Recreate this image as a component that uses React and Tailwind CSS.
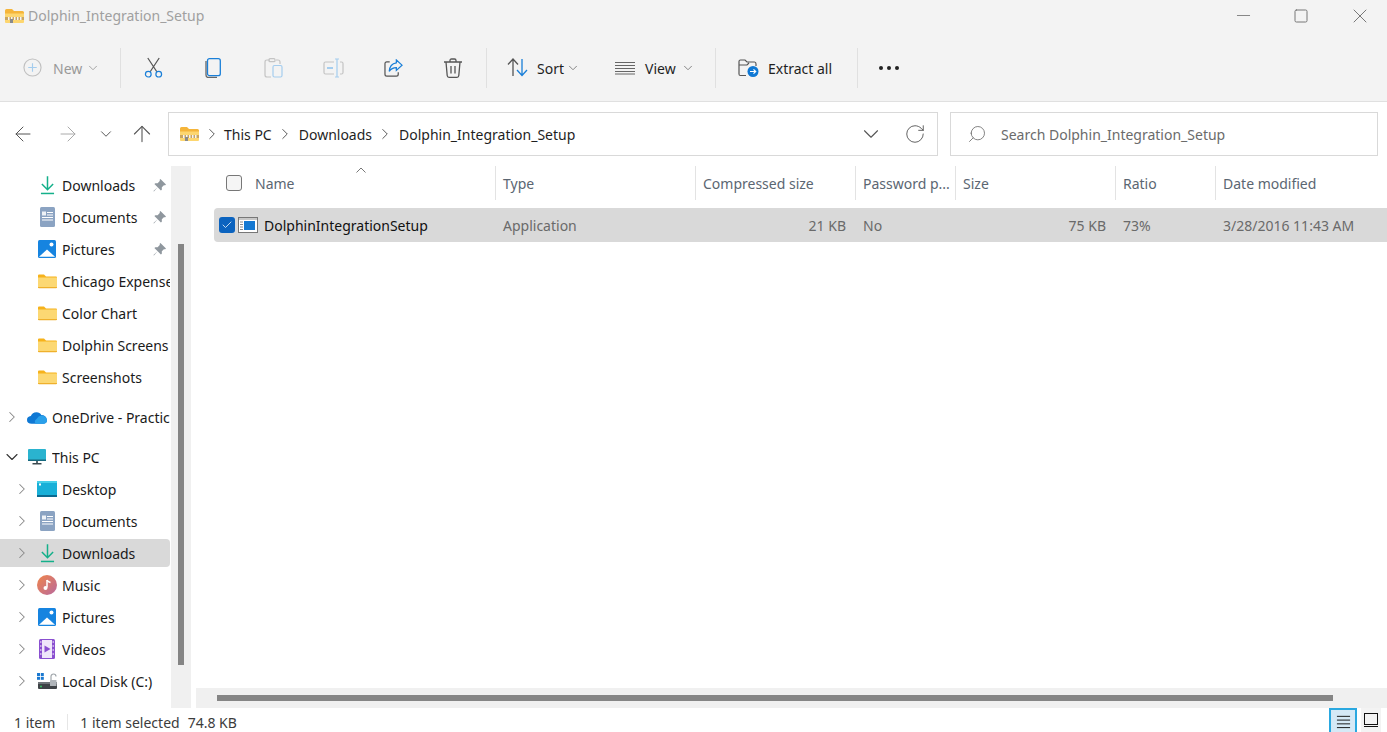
import { ArrowLeft, ArrowRight, ArrowUp, ChevronDown, ChevronRight, Check, RotateCw, Search, Minus, Square, X } from 'lucide-react';

function ZipFolder({ className = 'w-[19px] h-[16px]' }) {
  return (
    <svg viewBox="0 0 19 16" className={className}>
      <path d="M0 2.500Q0 1 1.500 1H7l2 2h8.500Q19 3 19 4.500V6H0z" fill="#f5b53a" />
      <path d="M0 5.500h19v8.500q0 1-1 1H1q-1 0-1-1z" fill="#fdd66f" />
      <rect x="0" y="9" width="19" height="3" fill="#c9a560" />
      <rect x="3" y="9" width="1.500" height="3" fill="#f4f4f4" />
      <rect x="6" y="9" width="1.500" height="3" fill="#f4f4f4" />
      <rect x="9" y="9" width="1.500" height="3" fill="#f4f4f4" />
      <rect x="12" y="9" width="1.500" height="3" fill="#f4f4f4" />
      <rect x="15" y="9" width="1.500" height="3" fill="#f4f4f4" />
      <rect x="5" y="11" width="3" height="4" fill="#8a8a8a" />
    </svg>
  );
}

function Folder() {
  return (
    <svg viewBox="0 0 19 15" className="w-[19px] h-[15px]">
      <path d="M0 1.500Q0 .5 1 .5h5l2 2h10q1 0 1 1V5H0z" fill="#f6b21b" />
      <path d="M0 3.500h19V13q0 1-1 1H1q-1 0-1-1z" fill="#fcd873" />
      <path d="M0 13h19v.5q0 .8-1 .8H1q-1 0-1-.8z" fill="#efb02c" />
    </svg>
  );
}

function DownloadIcon() {
  return (
    <svg viewBox="0 0 16 20" className="w-[15px] h-[19px]" fill="none" stroke="#14b08a" strokeWidth="1.600">
      <path d="M8 0v14M2 8.500 8 14.500l6-6" />
      <path d="M1 18.500h14" />
    </svg>
  );
}

function DocIcon() {
  return (
    <svg viewBox="0 0 15 20" className="w-[15px] h-[20px]">
      <rect width="15" height="20" rx="1.500" fill="#8ba3c2" />
      <path d="M7 5.500h6M7 8h6M2 10.500h11M2 13h11" stroke="#fff" strokeWidth="1.200" />
      <rect x="2" y="4.500" width="4" height="4" fill="#eef2f7" />
    </svg>
  );
}

function PicIcon() {
  return (
    <svg viewBox="0 0 18 18" className="w-[18px] h-[18px]">
      <rect width="18" height="18" rx="1.500" fill="#1684e0" />
      <path d="M1 16.800 9 9.500l8 7.300z" fill="#fff" />
      <circle cx="13.500" cy="4.500" r="2" fill="#fff" />
    </svg>
  );
}

function OneDriveIcon() {
  return (
    <svg viewBox="0 0 21 13" className="w-[21px] h-[13px]">
      <path d="M5 13Q0 13 0 9q0-3.500 4-4 1.500-4 6-4 3.500 0 5 3 5 0 6 5 0 4-4 4z" fill="#0f78d4" />
      <path d="M9 13q-2-3 1-5 2-3 5-3.500 5 0 6 4.500 0 4-4 4z" fill="#2aa0ea" />
    </svg>
  );
}

function MonitorIcon() {
  return (
    <svg viewBox="0 0 18 16" className="w-[18px] h-[16px]">
      <rect width="18" height="12" rx="1" fill="#2ab3cf" />
      <path d="M0 10.500h18V12H0z" fill="#17697f" />
      <path d="M8 12h2v2H8z" fill="#5a6a70" />
      <path d="M4.500 14h9v1.500h-9z" fill="#3c4a50" />
    </svg>
  );
}

function DesktopIcon() {
  return (
    <svg viewBox="0 0 20 16" className="w-[20px] h-[16px]">
      <rect width="20" height="16" rx="1" fill="#19b0d8" />
      <rect width="20" height="2" fill="#46cfe8" />
      <rect y="14" width="20" height="2" fill="#0b6a90" />
      <rect x="2" y="2.500" width="2" height="2" fill="#fff" />
    </svg>
  );
}

function MusicIcon() {
  return (
    <svg viewBox="0 0 20 20" className="w-[20px] h-[20px]">
      <defs>
        <linearGradient id="mus" x1="0" y1="0" x2="1" y2="1">
          <stop offset="0" stopColor="#f0854a" />
          <stop offset="1" stopColor="#b8699e" />
        </linearGradient>
      </defs>
      <circle cx="10" cy="10" r="10" fill="url(#mus)" />
      <path d="M10 5v7.500" stroke="#fff" strokeWidth="1.500" />
      <circle cx="8.500" cy="13" r="2" fill="#fff" />
      <path d="M10 5q1 2 3.500 2.500" stroke="#fff" strokeWidth="1.500" fill="none" />
    </svg>
  );
}

function VideoIcon() {
  return (
    <svg viewBox="0 0 16 20" className="w-[16px] h-[20px]">
      <rect width="16" height="20" rx="1.500" fill="#8a4fd0" />
      <rect x="3" y="1" width="10" height="18" fill="#efe6fa" />
      <path d="M5.500 6.500 11.500 10l-6 3.500z" fill="#8a4fd0" />
      <path d="M1 3h1.500M1 7h1.500M1 11h1.500M1 15h1.500M13.500 3H15M13.500 7H15M13.500 11H15M13.500 15H15" stroke="#fff" strokeWidth="1.200" />
    </svg>
  );
}

function DiskIcon() {
  return (
    <svg viewBox="0 0 20 17" className="w-[20px] h-[17px]">
      <rect x="0" y="0" width="3" height="3" fill="#1a78d0" />
      <rect x="3.800" y="0" width="3" height="3" fill="#1a78d0" />
      <rect x="0" y="3.800" width="3" height="3" fill="#1a78d0" />
      <rect x="3.800" y="3.800" width="3" height="3" fill="#1a78d0" />
      <rect x="1" y="9" width="19" height="7" rx="1" fill="#3f4347" />
      <rect x="1" y="9" width="19" height="2" fill="#70757a" />
      <circle cx="4" cy="13.500" r=".9" fill="#3bd06a" />
      <path d="M14 7V3.500a2.500 2.500 0 0 1 5 0" stroke="#a0a6ab" strokeWidth="1.200" fill="none" />
      <rect x="13" y="7" width="6.500" height="6" rx=".5" fill="#b0b5ba" />
    </svg>
  );
}

function PinIcon() {
  return (
    <svg viewBox="0 0 14 14" className="w-[13px] h-[13px]" fill="#8f979e">
      <path d="M8 0 14 6 12.800 7 12 6.500 9.500 9 9.500 11.500 8.500 12.500 5 9 1 13.500 .5 13 5 9 1.500 5.500 2.500 4.500 5 4.500 7.500 2 7 1.200z" />
    </svg>
  );
}

function Sep() {
  return <div className="w-px h-10 bg-[#e0e0e0] shrink-0" />;
}

function Caret() {
  return <ChevronDown size={14} strokeWidth={1.500} className="text-[#777]" />;
}

function IconBtn({ children }) {
  return <div className="w-[60px] h-10 flex items-center justify-center shrink-0">{children}</div>;
}

function Toolbar() {
  return (
    <div className="h-[67px] flex items-center">
      <div className="w-[120px] flex items-center pl-[23px] shrink-0">
        <svg viewBox="0 0 20 20" className="w-[19px] h-[19px]" fill="none">
          <circle cx="10" cy="10" r="9" stroke="#c0c0c0" strokeWidth="1.200" />
          <path d="M10 5.500v9M5.500 10h9" stroke="#a5cdee" strokeWidth="1.200" />
        </svg>
        <span className="ml-[11px] pt-[2px] text-[#999]">New</span>
        <span className="ml-[4px] opacity-70"><Caret /></span>
      </div>
      <Sep />
      <div className="w-[2px]" />
      <IconBtn>
        <svg viewBox="0 0 20 22" className="w-[19px] h-[21px]" fill="none" strokeWidth="1.300">
          <path d="M4 1l9.500 14.500M16 1 6.500 15.500" stroke="#555" />
          <circle cx="4.500" cy="18" r="3" stroke="#1a7fd8" />
          <circle cx="15.500" cy="18" r="3" stroke="#1a7fd8" />
        </svg>
      </IconBtn>
      <IconBtn>
        <svg viewBox="0 0 16 20" className="w-[16px] h-[20px]" fill="none" strokeWidth="1.300">
          <path d="M1 3v14q0 2.500 2.500 2.500H12" stroke="#666" />
          <rect x="2.500" y=".7" width="12.800" height="17" rx="2" stroke="#1a7fd8" />
        </svg>
      </IconBtn>
      <IconBtn>
        <svg viewBox="0 0 19 20" className="w-[19px] h-[20px]" fill="none" strokeWidth="1.200">
          <path d="M6 2H3Q1 2 1 4v13q0 2 2 2h4M12 2h2q2 0 2 2v2" stroke="#c4c4c4" />
          <rect x="5" y=".7" width="6" height="3" rx="1" stroke="#c4c4c4" />
          <rect x="9" y="7.500" width="9" height="11.500" rx="1.500" stroke="#a5cdee" />
        </svg>
      </IconBtn>
      <IconBtn>
        <svg viewBox="0 0 21 20" className="w-[21px] h-[20px]" fill="none" strokeWidth="1.200">
          <path d="M11 4H2.500Q1 4 1 5.500v9Q1 16 2.500 16H11M17 4h1.500Q20 4 20 5.500v9q0 1.500-1.500 1.500H17" stroke="#c4c4c4" />
          <path d="M14 1v18M12 1h4M12 19h4" stroke="#a5cdee" />
          <path d="M4 10h6" stroke="#a5cdee" strokeWidth="2" />
        </svg>
      </IconBtn>
      <IconBtn>
        <svg viewBox="0 0 20 19" className="w-[19px] h-[18px]" fill="none" strokeWidth="1.300">
          <path d="M6 3H3Q1 3 1 5v11q0 2 2 2h10q2 0 2-2v-2" stroke="#555" />
          <path d="M13 1l6 5.500-6 5.500V9Q8 9 5.500 13 6 5 13 4z" stroke="#1a7fd8" />
        </svg>
      </IconBtn>
      <IconBtn>
        <svg viewBox="0 0 18 20" className="w-[18px] h-[20px]" fill="none" stroke="#555" strokeWidth="1.300">
          <path d="M0 4h18M6 4V2.500Q6 1 7.500 1h3Q12 1 12 2.500V4M2 4l1.200 13.500Q3.400 19.300 5 19.300h8q1.600 0 1.800-1.800L16 4M7 8v7.500M11 8v7.500" />
        </svg>
      </IconBtn>
      <div className="w-[3px]" />
      <Sep />
      <div className="w-[228px] flex items-center pl-[20px] shrink-0">
        <svg viewBox="0 0 21 19" className="w-[21px] h-[19px] shrink-0" fill="none" strokeWidth="1.300">
          <path d="M6 18V1.500M1 6.500l5-5.500 5 5.500" stroke="#555" />
          <path d="M15 1v16.500M10 12l5 5.500 5-5.500" stroke="#1a7fd8" />
        </svg>
        <span className="ml-[9px] pt-[2px] text-[#1f1f1f]">Sort</span>
        <span className="ml-[2px]"><Caret /></span>
        <svg viewBox="0 0 20 14" className="w-[20px] h-[14px] ml-[35px] shrink-0" fill="none" stroke="#666" strokeWidth="1">
          <path d="M0 1.500h20M0 4.500h20M0 7.500h20M0 10.500h20M0 13h20" />
        </svg>
        <span className="ml-[10px] pt-[2px] text-[#1f1f1f]">View</span>
        <span className="ml-[5px]"><Caret /></span>
      </div>
      <Sep />
      <div className="w-[141px] flex items-center pl-[22px] shrink-0">
        <svg viewBox="0 0 21 18" className="w-[21px] h-[18px] shrink-0">
          <path d="M8 16.500H2.500Q1 16.500 1 15V2.500Q1 1 2.500 1h4.500l2 2h7.500Q18 3 18 5v2M1 6h8l2-2" fill="none" stroke="#555" strokeWidth="1.200" />
          <circle cx="15" cy="12.500" r="5.500" fill="#0f78d4" />
          <path d="M12 12.500h5.500M15.500 10.300l2.200 2.200-2.200 2.200" fill="none" stroke="#fff" strokeWidth="1.200" />
        </svg>
        <span className="ml-[9px] pt-[2px] whitespace-nowrap text-[#1f1f1f]">Extract all</span>
      </div>
      <Sep />
      <div className="flex items-center gap-[4px] ml-[21px] pt-[1px]">
        <div className="w-[4px] h-[4px] rounded-full bg-[#222]" />
        <div className="w-[4px] h-[4px] rounded-full bg-[#222]" />
        <div className="w-[4px] h-[4px] rounded-full bg-[#222]" />
      </div>
    </div>
  );
}

function NavRow({ icon, label, level = 1, arrow = true, open, pin, selected }) {
  return (
    <div className="h-8 py-0.5 shrink-0">
      <div className={`h-7 flex items-center rounded-r mr-px ${selected ? 'bg-[#d9d9d9]' : ''}`}>
        <div className={level === 1 ? 'w-[17px] shrink-0' : 'w-[7px] shrink-0'} />
        <div className="w-[10px] flex justify-center shrink-0">
          {arrow && (open
            ? <ChevronDown size={20} strokeWidth={1.300} className="text-[#333] shrink-0" />
            : <ChevronRight size={18} strokeWidth={1.400} className="text-[#888] shrink-0" />)}
        </div>
        <div className="w-5 ml-[10px] flex justify-center shrink-0">{icon}</div>
        <span className="ml-[5px] whitespace-nowrap overflow-hidden flex-1 text-[#1a1a1a]">{label}</span>
        {pin && <div className="mr-[4px] ml-1 shrink-0"><PinIcon /></div>}
      </div>
    </div>
  );
}

function Sidebar() {
  return (
    <div className="w-[171px] shrink-0 overflow-hidden flex flex-col pt-[3px]">
      <NavRow icon={<DownloadIcon />} label="Downloads" arrow={false} pin />
      <NavRow icon={<DocIcon />} label="Documents" arrow={false} pin />
      <NavRow icon={<PicIcon />} label="Pictures" arrow={false} pin />
      <NavRow icon={<Folder />} label="Chicago Expense" arrow={false} />
      <NavRow icon={<Folder />} label="Color Chart" arrow={false} />
      <NavRow icon={<Folder />} label="Dolphin Screens" arrow={false} />
      <NavRow icon={<Folder />} label="Screenshots" arrow={false} />
      <div className="mt-2">
        <NavRow level={0} icon={<OneDriveIcon />} label="OneDrive - Practic" />
      </div>
      <div className="mt-2">
        <NavRow level={0} open icon={<MonitorIcon />} label="This PC" />
      </div>
      <NavRow icon={<DesktopIcon />} label="Desktop" />
      <NavRow icon={<DocIcon />} label="Documents" />
      <NavRow icon={<DownloadIcon />} label="Downloads" selected />
      <NavRow icon={<MusicIcon />} label="Music" />
      <NavRow icon={<PicIcon />} label="Pictures" />
      <NavRow icon={<VideoIcon />} label="Videos" />
      <NavRow icon={<DiskIcon />} label="Local Disk (C:)" />
    </div>
  );
}

const columns = 'grid grid-cols-[281px_200px_160px_100px_160px_100px_172px]';

function HeaderCell({ label }) {
  return (
    <div className="h-[34px] flex items-center pl-[7px] border-l border-[#e3e3e3] text-[#5b6672] whitespace-nowrap">
      {label}
    </div>
  );
}

export default function App() {
  return (
    <div className="w-[1387px] h-[732px] bg-white flex flex-col overflow-hidden text-[14px] font-['Noto_Sans','Open_Sans',sans-serif]">
      {/* title bar + command bar */}
      <div className="h-[102px] bg-[#f3f3f3] border-b border-[#e0e0e0] shrink-0 flex flex-col">
        <div className="h-[34px] flex items-center pl-[5px] pb-[3px] shrink-0">
          <ZipFolder />
          <span className="ml-[4px] text-[#a0a0a0] whitespace-nowrap">Dolphin_Integration_Setup</span>
          <div className="ml-auto mr-[15px] flex items-center gap-[37px] text-[#777]">
            <Minus size={21} strokeWidth={1} />
            <Square size={16} strokeWidth={1.500} className="mx-[2px]" />
            <X size={24} strokeWidth={1} />
          </div>
        </div>
        <Toolbar />
      </div>

      {/* address row */}
      <div className="h-[64px] shrink-0 flex items-center">
        <div className="w-[168px] shrink-0 flex items-center text-[#555]">
          <div className="w-[45px] flex justify-center"><ArrowLeft size={24} strokeWidth={1} /></div>
          <div className="w-[46px] flex justify-center text-[#aaa]"><ArrowRight size={24} strokeWidth={1} /></div>
          <div className="w-[29px] flex justify-center"><ChevronDown size={18} strokeWidth={1.300} /></div>
          <div className="w-[44px] flex justify-center"><ArrowUp size={26} strokeWidth={1} /></div>
        </div>
        <div className="w-[770px] h-[44px] border border-[#d9d9d9] flex items-center pl-[11px] shrink-0 text-[#1f1f1f]">
          <ZipFolder />
          <ChevronRight size={18} strokeWidth={1.300} className="ml-[4px] text-[#555] shrink-0" />
          <span className="ml-[3px]">This PC</span>
          <ChevronRight size={18} strokeWidth={1.300} className="ml-[4px] text-[#555] shrink-0" />
          <span className="ml-[5px]">Downloads</span>
          <ChevronRight size={18} strokeWidth={1.300} className="ml-[4px] text-[#555] shrink-0" />
          <span className="ml-[5px]">Dolphin_Integration_Setup</span>
          <ChevronDown size={26} strokeWidth={1} className="ml-auto text-[#555] shrink-0" />
          <RotateCw size={22} strokeWidth={1} className="ml-[20px] mr-[11px] text-[#555] shrink-0" />
        </div>
        <div className="w-[428px] h-[44px] ml-[12px] border border-[#d9d9d9] flex items-center pl-[16px] text-[#6b6b6b]">
          <Search size={20} strokeWidth={1} className="-scale-x-100 shrink-0" />
          <span className="ml-[14px] whitespace-nowrap">Search Dolphin_Integration_Setup</span>
        </div>
      </div>

      {/* body */}
      <div className="flex-1 min-h-0 flex">
        <Sidebar />
        <div className="w-5 shrink-0 bg-[#f0f0f0] pl-[7px] pt-[78px]">
          <div className="w-[6px] h-[421px] bg-[#858585]" />
        </div>
        <div className="w-[5px] shrink-0" />
        <div className="flex-1 min-w-0 flex flex-col">
          <div className="flex-1 pl-[18px] relative">
            <div className={columns}>
              <div className="h-[34px] flex items-center pl-[12px] text-[#5b6672]">
                <div className="w-4 h-4 rounded-[3px] border border-[#777] bg-[#f5f5f5] shrink-0" />
                <span className="ml-[13px]">Name</span>
              </div>
              <HeaderCell label="Type" />
              <HeaderCell label="Compressed size" />
              <HeaderCell label="Password p..." />
              <HeaderCell label="Size" />
              <HeaderCell label="Ratio" />
              <HeaderCell label="Date modified" />
            </div>
            <svg viewBox="0 0 10 6" className="absolute left-[160px] top-[1px] w-[10px] h-[6px]" fill="none" stroke="#777">
              <path d="M.5 5.500 5 1l4.500 4.500" />
            </svg>
            <div className={`${columns} mt-[8px] h-[34px] bg-[#d9d9d9] items-center rounded-l-sm text-[#6a6a6a]`}>
              <div className="flex items-center pl-[5px]">
                <div className="w-4 h-4 rounded-[3px] bg-[#0b63bf] flex items-center justify-center shrink-0">
                  <Check size={12} strokeWidth={1.500} className="text-white" />
                </div>
                <svg viewBox="0 0 20 16" className="w-5 h-4 ml-[3px] shrink-0">
                  <rect x=".5" y=".5" width="19" height="15" fill="#fff" stroke="#777" />
                  <rect x="1" y="1" width="18" height="2" fill="#c8c8c8" />
                  <rect x="6" y="4" width="11" height="9" fill="#1478d2" />
                  <path d="M2 5h3M2 7.500h3M2 10h3M2 12.500h3" stroke="#8a8a8a" />
                </svg>
                <span className="ml-[6px] text-[#111] whitespace-nowrap">DolphinIntegrationSetup</span>
              </div>
              <div className="pl-[8px]">Application</div>
              <div className="pr-[9px] text-right">21 KB</div>
              <div className="pl-[8px]">No</div>
              <div className="pr-[9px] text-right">75 KB</div>
              <div className="pl-[8px]">73%</div>
              <div className="pl-[8px] whitespace-nowrap">3/28/2016 11:43 AM</div>
            </div>
          </div>
          <div className="h-5 shrink-0 bg-[#f0f0f0] flex items-center pl-[21px]">
            <div className="w-[1116px] h-[6px] bg-[#858585]" />
          </div>
        </div>
      </div>

      {/* status bar */}
      <div className="h-6 shrink-0 flex items-center pl-[14px] text-[#3c3c3c]">
        <div className="flex items-center pt-1 whitespace-nowrap">
          <span>1 item</span>
          <div className="w-px h-4 bg-[#e6e6e6] ml-[12px]" />
          <span className="ml-[12px]">1 item selected</span>
          <span className="ml-[8px]">74.8 KB</span>
        </div>
        <div className="ml-auto flex items-center mr-[6px] h-full">
          <div className="w-[28px] h-full border-2 border-b-0 border-[#2aa8e0] bg-[#d5e9f6] flex items-center justify-center">
            <svg viewBox="0 0 16 16" className="w-[15px] h-[15px]" fill="none" stroke="#111">
              <path d="M1 2.500h14M1 6.500h14M1 10.500h14M1 14.500h14" />
            </svg>
          </div>
          <div className="w-[20px] h-full ml-[4px] bg-[#f3f3f3] flex items-center justify-center">
            <svg viewBox="0 0 14 14" className="w-[14px] h-[14px]" fill="none" stroke="#111">
              <rect x=".5" y=".5" width="13" height="11" />
              <path d="M0 13.500h14" />
            </svg>
          </div>
        </div>
      </div>
    </div>
  );
}
